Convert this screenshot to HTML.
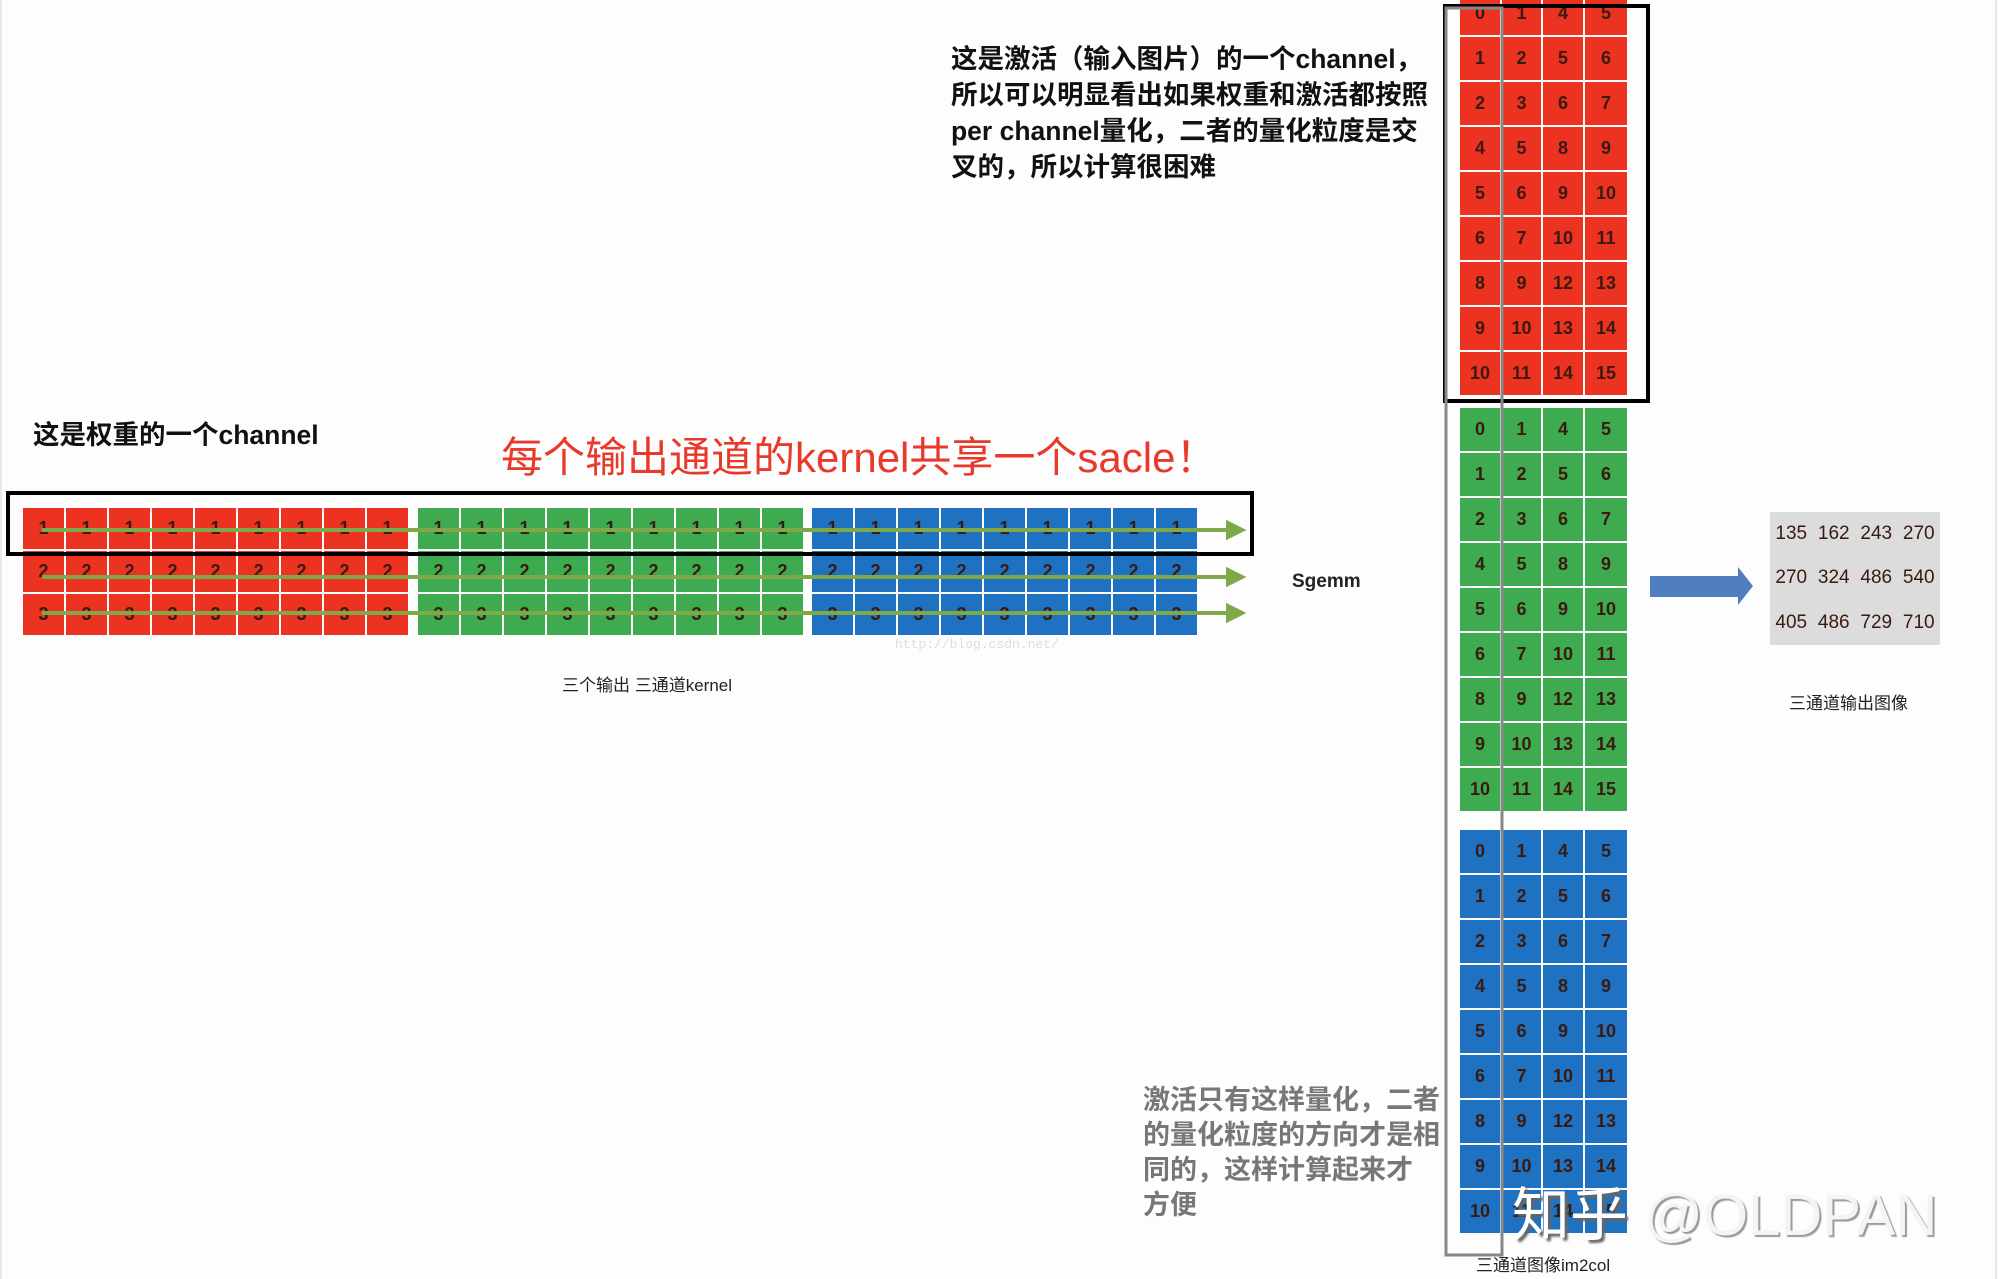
<!DOCTYPE html>
<html><head><meta charset="utf-8"><style>
body{margin:0;width:1999px;height:1279px;background:#fdfdfd;position:relative;overflow:hidden;font-family:"Liberation Sans","Noto Sans CJK SC",sans-serif}
.a{position:absolute}
.g{position:absolute;display:grid;gap:2px}
.g div{display:flex;align-items:center;justify-content:center;font-size:18px;color:#3a1a10;font-weight:bold}
.r div{background:#ec3322}.gr div{background:#3eab50}.b div{background:#1f72c2}
.col{grid-template-columns:40px 39px 40px 42px;grid-auto-rows:43px}
.strip{grid-template-columns:repeat(9,41px);grid-auto-rows:41px}
.t{font-weight:bold;font-size:26.5px;color:#111;line-height:36px}
</style></head><body>
<div class="a" style="left:0;top:0;width:2px;height:1279px;background:#e8e8e8"></div>
<div class="a" style="left:1995px;top:0;width:2px;height:1279px;background:#e6e6e6"></div>

<div class="a t" style="left:951px;top:41px;width:520px">这是激活（输入图片）的一个channel，<br>所以可以明显看出如果权重和激活都按照<br>per channel量化，二者的量化粒度是交<br>叉的，所以计算很困难</div>
<div class="a t" style="left:33px;top:417px">这是权重的一个channel</div>
<div class="a" style="left:501px;top:424px;font-size:42px;color:#e8392a;white-space:nowrap">每个输出通道的kernel共享一个sacle！</div>

<div class="g strip r" style="left:23px;top:508px"><div>1</div><div>1</div><div>1</div><div>1</div><div>1</div><div>1</div><div>1</div><div>1</div><div>1</div><div>2</div><div>2</div><div>2</div><div>2</div><div>2</div><div>2</div><div>2</div><div>2</div><div>2</div><div>3</div><div>3</div><div>3</div><div>3</div><div>3</div><div>3</div><div>3</div><div>3</div><div>3</div></div>
<div class="g strip gr" style="left:418px;top:508px"><div>1</div><div>1</div><div>1</div><div>1</div><div>1</div><div>1</div><div>1</div><div>1</div><div>1</div><div>2</div><div>2</div><div>2</div><div>2</div><div>2</div><div>2</div><div>2</div><div>2</div><div>2</div><div>3</div><div>3</div><div>3</div><div>3</div><div>3</div><div>3</div><div>3</div><div>3</div><div>3</div></div>
<div class="g strip b" style="left:812px;top:508px"><div>1</div><div>1</div><div>1</div><div>1</div><div>1</div><div>1</div><div>1</div><div>1</div><div>1</div><div>2</div><div>2</div><div>2</div><div>2</div><div>2</div><div>2</div><div>2</div><div>2</div><div>2</div><div>3</div><div>3</div><div>3</div><div>3</div><div>3</div><div>3</div><div>3</div><div>3</div><div>3</div></div>
<svg class="a" style="left:0;top:0" width="1999" height="1279">
<g stroke="#7fa84a" stroke-width="4" fill="#7fa84a">
<line x1="42" y1="530" x2="1228" y2="530"/><polygon points="1228,523 1242,530 1228,537"/>
<line x1="42" y1="577" x2="1228" y2="577"/><polygon points="1228,570 1242,577 1228,584"/>
<line x1="42" y1="613" x2="1228" y2="613"/><polygon points="1228,606 1242,613 1228,620"/>
</g>
<rect x="8" y="493" width="1244" height="61" fill="none" stroke="#000" stroke-width="4"/>
<polygon points="1650,576 1738,576 1738,567 1753,586 1738,605 1738,597 1650,597" fill="#4f7fbf"/>
</svg>
<div class="a" style="left:895px;top:637px;font-size:13px;color:#ddd;font-family:'Liberation Mono',monospace">http://blog.csdn.net/</div>
<div class="a" style="left:562px;top:671px;font-size:17px;color:#222">三个输出 三通道kernel</div>
<div class="a" style="left:1292px;top:571px;font-size:19px;font-weight:bold;color:#222">Sgemm</div>

<div class="g col r" style="left:1460px;top:-8px"><div>0</div><div>1</div><div>4</div><div>5</div><div>1</div><div>2</div><div>5</div><div>6</div><div>2</div><div>3</div><div>6</div><div>7</div><div>4</div><div>5</div><div>8</div><div>9</div><div>5</div><div>6</div><div>9</div><div>10</div><div>6</div><div>7</div><div>10</div><div>11</div><div>8</div><div>9</div><div>12</div><div>13</div><div>9</div><div>10</div><div>13</div><div>14</div><div>10</div><div>11</div><div>14</div><div>15</div></div>
<div class="g col gr" style="left:1460px;top:408px"><div>0</div><div>1</div><div>4</div><div>5</div><div>1</div><div>2</div><div>5</div><div>6</div><div>2</div><div>3</div><div>6</div><div>7</div><div>4</div><div>5</div><div>8</div><div>9</div><div>5</div><div>6</div><div>9</div><div>10</div><div>6</div><div>7</div><div>10</div><div>11</div><div>8</div><div>9</div><div>12</div><div>13</div><div>9</div><div>10</div><div>13</div><div>14</div><div>10</div><div>11</div><div>14</div><div>15</div></div>
<div class="g col b" style="left:1460px;top:830px"><div>0</div><div>1</div><div>4</div><div>5</div><div>1</div><div>2</div><div>5</div><div>6</div><div>2</div><div>3</div><div>6</div><div>7</div><div>4</div><div>5</div><div>8</div><div>9</div><div>5</div><div>6</div><div>9</div><div>10</div><div>6</div><div>7</div><div>10</div><div>11</div><div>8</div><div>9</div><div>12</div><div>13</div><div>9</div><div>10</div><div>13</div><div>14</div><div>10</div><div>11</div><div>14</div><div>15</div></div>
<svg class="a" style="left:0;top:0" width="1999" height="1279">
<rect x="1445" y="6" width="203" height="395" fill="none" stroke="#000" stroke-width="4"/>
<rect x="1446" y="8" width="56" height="1247" fill="none" stroke="#888" stroke-width="3"/>
</svg>

<div class="g" style="left:1770px;top:512px;width:170px;height:133px;background:#dcdcdc;grid-template-columns:repeat(4,1fr);grid-template-rows:repeat(3,1fr);gap:0">
<div style="font-size:19px;font-weight:normal">135</div><div style="font-size:19px;font-weight:normal">162</div><div style="font-size:19px;font-weight:normal">243</div><div style="font-size:19px;font-weight:normal">270</div>
<div style="font-size:19px;font-weight:normal">270</div><div style="font-size:19px;font-weight:normal">324</div><div style="font-size:19px;font-weight:normal">486</div><div style="font-size:19px;font-weight:normal">540</div>
<div style="font-size:19px;font-weight:normal">405</div><div style="font-size:19px;font-weight:normal">486</div><div style="font-size:19px;font-weight:normal">729</div><div style="font-size:19px;font-weight:normal">710</div></div>
<div class="a" style="left:1789px;top:689px;font-size:17px;color:#222">三通道输出图像</div>

<div class="a" style="left:1143px;top:1083px;font-size:27px;font-weight:bold;color:#777;line-height:35px;width:310px">激活只有这样量化，二者<br>的量化粒度的方向才是相<br>同的，这样计算起来才<br>方便</div>
<div class="a" style="left:1512px;top:1168px;font-size:58px;color:#fff;white-space:nowrap;text-shadow:3px 3px 2px #666">知乎 <span style="color:#f4f4f4;font-weight:normal;text-shadow:2px 2px 1px #999">@OLDPAN</span></div>
<div class="a" style="left:1476px;top:1251px;font-size:17px;color:#222">三通道图像im2col</div>
</body></html>
